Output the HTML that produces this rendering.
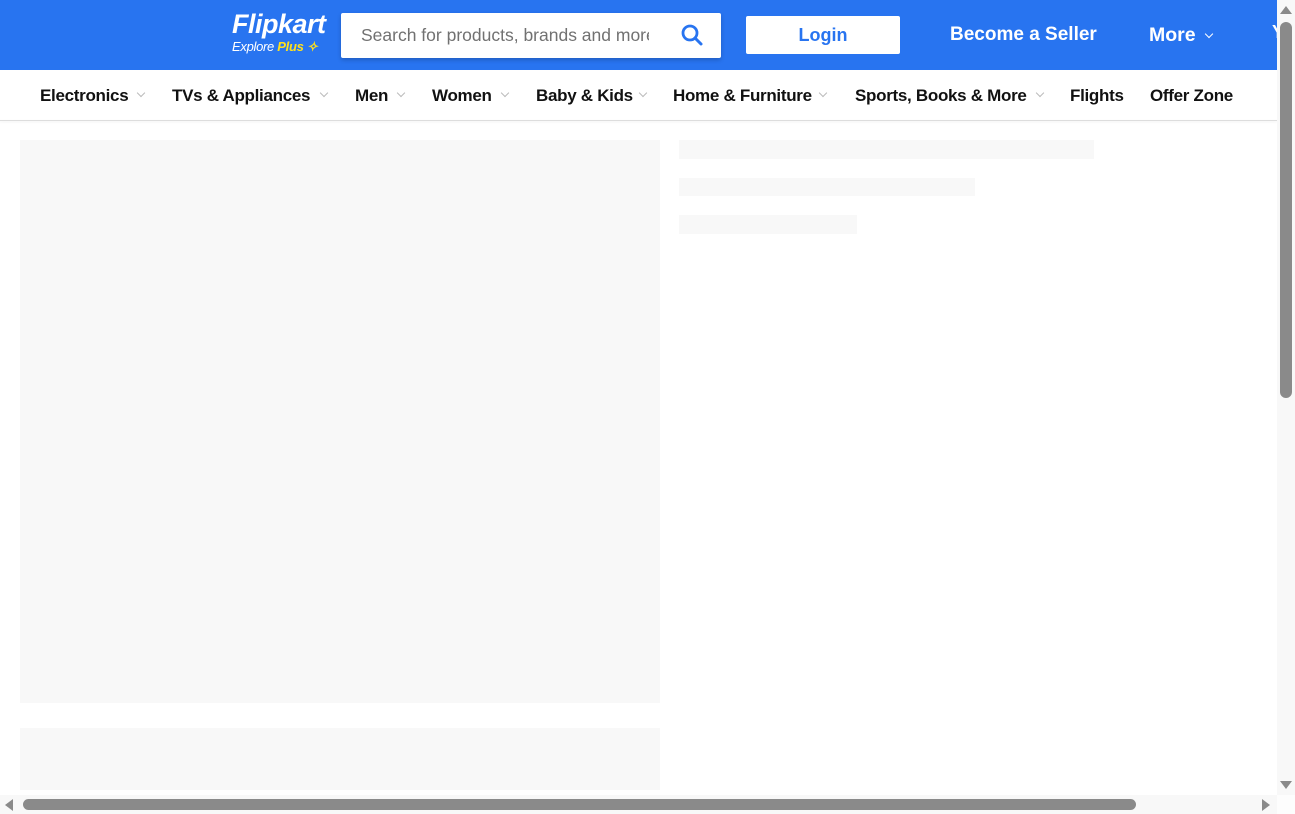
<!DOCTYPE html>
<html><head><meta charset="utf-8"><style>
*{margin:0;padding:0;box-sizing:border-box}
body{width:1295px;height:814px;overflow:hidden;background:#fff;font-family:"Liberation Sans",sans-serif;position:relative}
.hdr{position:absolute;left:0;top:0;width:1277px;height:70px;background:#2874f0}
.abs{position:absolute}
.nav{position:absolute;top:86px;font-size:17px;font-weight:bold;color:#111;white-space:nowrap;letter-spacing:-0.3px}
.chev{position:absolute;top:90px;width:6px;height:6px;border-right:1px solid #bbb;border-bottom:1px solid #bbb;transform:rotate(45deg)}
.ph{position:absolute;background:#f8f8f8}
</style></head><body>
<div class="hdr"></div>
<div class="abs" style="left:232px;top:9px;color:#fff;font-size:27px;font-weight:bold;font-style:italic;letter-spacing:-0.5px">Flipkart</div>
<div class="abs" style="left:232px;top:39px;color:#fff;font-size:13px;font-style:italic;letter-spacing:-0.3px">Explore <span style="color:#ffe11b;font-weight:bold">Plus</span><span style="color:#ffe11b;font-size:13px;font-weight:bold"> ✧</span></div>
<div class="abs" style="left:341px;top:13px;width:380px;height:45px;background:#fff;border-radius:2px;box-shadow:0 2px 4px rgba(0,0,0,.2)"></div>
<div class="abs" style="left:361px;top:25px;font-size:17.5px;color:#717171;width:288px;overflow:hidden;white-space:nowrap">Search for products, brands and more</div>
<svg class="abs" style="left:680px;top:23px" width="24" height="24" viewBox="0 0 24 24"><circle cx="10" cy="10" r="7" fill="none" stroke="#2874f0" stroke-width="2.8"/><path d="M15 15l6 6" stroke="#2874f0" stroke-width="3" stroke-linecap="round"/></svg>
<div class="abs" style="left:746px;top:16px;width:154px;height:38px;background:#fff;border-radius:2px;color:#2874f0;font-size:18px;font-weight:bold;text-align:center;line-height:38px">Login</div>
<div class="abs" style="left:950px;top:24px;color:#fff;font-size:19px;font-weight:bold">Become a Seller</div>
<div class="abs" style="left:1149px;top:24px;color:#fff;font-size:19.5px;font-weight:bold">More</div>
<div class="abs" style="left:1206px;top:31px;width:6px;height:6px;border-right:1.5px solid #fff;border-bottom:1.5px solid #fff;transform:rotate(45deg)"></div>
<div class="abs" style="left:1272px;top:22px;color:#fff;font-size:18px;font-weight:bold">Y</div>

<div class="nav" style="left:40px">Electronics</div><div class="chev" style="left:138px"></div>
<div class="nav" style="left:172px">TVs &amp; Appliances</div><div class="chev" style="left:321px"></div>
<div class="nav" style="left:355px">Men</div><div class="chev" style="left:398px"></div>
<div class="nav" style="left:432px">Women</div><div class="chev" style="left:502px"></div>
<div class="nav" style="left:536px">Baby &amp; Kids</div><div class="chev" style="left:640px"></div>
<div class="nav" style="left:673px">Home &amp; Furniture</div><div class="chev" style="left:820px"></div>
<div class="nav" style="left:855px">Sports, Books &amp; More</div><div class="chev" style="left:1037px"></div>
<div class="nav" style="left:1070px">Flights</div>
<div class="nav" style="left:1150px">Offer Zone</div>
<div class="abs" style="left:0;top:120px;width:1277px;height:1px;background:#ddd;box-shadow:0 1px 2px rgba(0,0,0,.08)"></div>

<div class="ph" style="left:20px;top:140px;width:640px;height:563px"></div>
<div class="ph" style="left:20px;top:728px;width:640px;height:62px"></div>
<div class="ph" style="left:679px;top:140px;width:415px;height:19px"></div>
<div class="ph" style="left:679px;top:178px;width:296px;height:18px"></div>
<div class="ph" style="left:679px;top:215px;width:178px;height:19px"></div>

<div class="abs" style="left:1277px;top:0;width:18px;height:795px;background:#f8f8f8"></div>
<div class="abs" style="left:1280px;top:22px;width:12px;height:376px;background:#8a8a8a;border-radius:6px"></div>
<div class="abs" style="left:1280px;top:6px;width:0;height:0;border-left:6px solid transparent;border-right:6px solid transparent;border-bottom:8px solid #8a8a8a"></div>
<div class="abs" style="left:1280px;top:781px;width:0;height:0;border-left:6px solid transparent;border-right:6px solid transparent;border-top:8px solid #8a8a8a"></div>
<div class="abs" style="left:0;top:795px;width:1277px;height:19px;background:#f8f8f8"></div>
<div class="abs" style="left:1277px;top:795px;width:18px;height:19px;background:#fdfdfd"></div>
<div class="abs" style="left:23px;top:799px;width:1113px;height:11px;background:#8a8a8a;border-radius:6px"></div>
<div class="abs" style="left:5px;top:799px;width:0;height:0;border-top:6px solid transparent;border-bottom:6px solid transparent;border-right:8px solid #8a8a8a"></div>
<div class="abs" style="left:1262px;top:799px;width:0;height:0;border-top:6px solid transparent;border-bottom:6px solid transparent;border-left:8px solid #8a8a8a"></div>
</body></html>
